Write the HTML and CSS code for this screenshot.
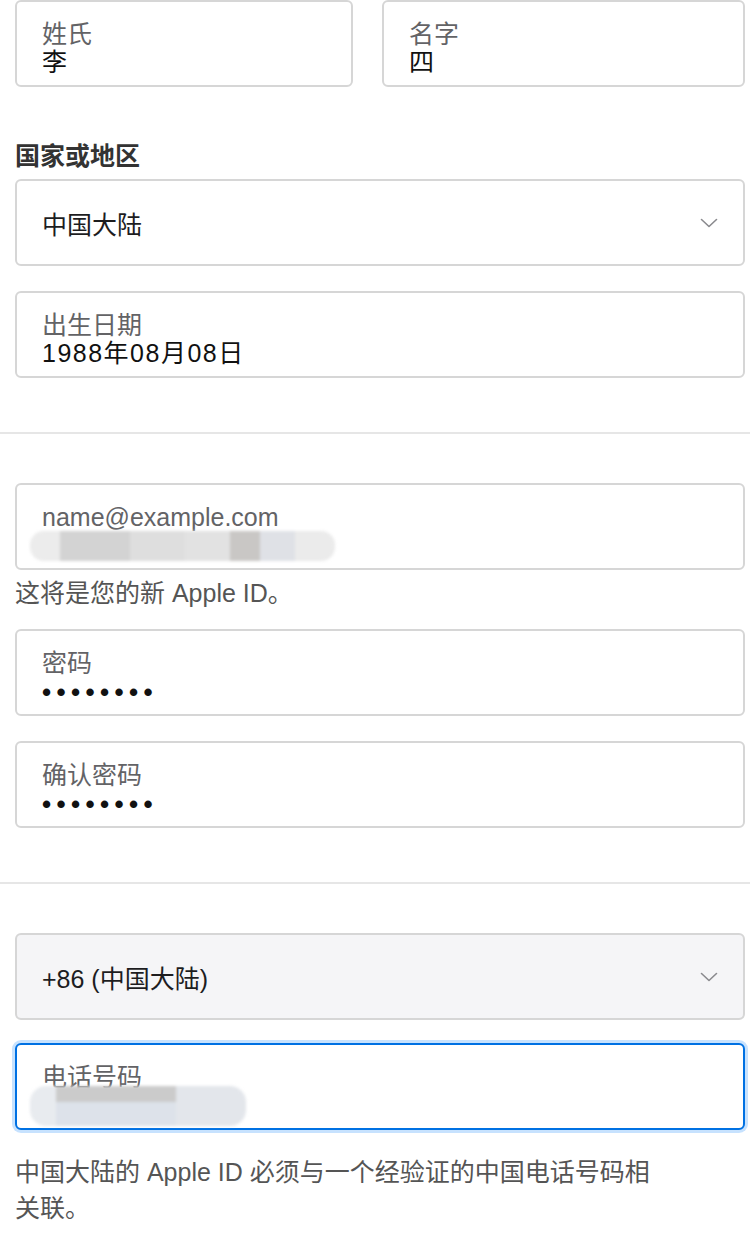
FILE: index.html
```html
<!DOCTYPE html>
<html lang="zh-CN">
<head>
  <meta charset="UTF-8">
  <title>创建 Apple ID</title>
  <link rel="stylesheet" href="styles.css">
</head>
<body>
<div class="form">
  <!-- 姓名 -->
  <div class="section">
    <div class="row">
      <div class="field">
        <p class="label">姓氏</p>
        <p class="value">李</p>
      </div>
      <div class="field">
        <p class="label">名字</p>
        <p class="value">四</p>
      </div>
    </div>
    <p class="title">国家或地区</p>
    <div class="select">
      <span>中国大陆</span>
      <svg class="arrow" width="18" height="10" viewBox="0 0 18 10"><path d="M1.5 1.5l7.5 7 7.5-7" fill="none" stroke="#8a8a8e" stroke-width="1.6" stroke-linecap="round" stroke-linejoin="round"/></svg>
    </div>
    <div class="field gapTop">
      <p class="label">出生日期</p>
      <p class="value">1988年08月08日</p>
    </div>
  </div>

  <div class="line"></div>

  <!-- 账号 -->
  <div class="section">
    <div class="field">
      <p class="label">name@example.com</p>
      <div class="mosaic">
        <span class="m1"></span><span class="m2"></span><span class="m3"></span><span class="m4"></span><span class="m5"></span><span class="m6"></span><span class="m7"></span>
      </div>
    </div>
    <p class="tip">这将是您的新 Apple ID。</p>
    <div class="field pwdTop">
      <p class="label">密码</p>
      <p class="dots">••••••••</p>
    </div>
    <div class="field gapTop">
      <p class="label">确认密码</p>
      <p class="dots">••••••••</p>
    </div>
  </div>

  <div class="line"></div>

  <!-- 电话 -->
  <div class="section">
    <div class="select grey">
      <span>+86 (中国大陆)</span>
      <svg class="arrow" width="18" height="10" viewBox="0 0 18 10"><path d="M1.5 1.5l7.5 7 7.5-7" fill="none" stroke="#8a8a8e" stroke-width="1.6" stroke-linecap="round" stroke-linejoin="round"/></svg>
    </div>
    <div class="field focus">
      <p class="label">电话号码</p>
      <div class="mosaic phone">
        <span class="p1"></span><span class="p2"></span><span class="p3"></span>
      </div>
    </div>
    <p class="help">中国大陆的 Apple ID 必须与一个经验证的中国电话号码相关联。</p>
  </div>
</div>
</body>
</html>
```

FILE: styles.css
```css
*{
  margin: 0;
  padding: 0;
}
html,body{
  width: 100%;
  background-color: #fff;
}
body{
  font-family: "Liberation Sans", "Noto Sans CJK SC", sans-serif;
  font-size: 26px;
  color: #1d1d1f;
}
.form{
  width: 750px;
}
.section{
  padding: 0 5px 0 15px;
}
/*两列*/
.row{
  display: grid;
  grid-template-columns: 338px 1fr;
  gap: 29px;
}
/*输入框*/
.field{
  position: relative;
  height: 87px;
  border: 2px solid #d6d6d6;
  border-radius: 6px;
  padding: 18px 25px 0;
  box-sizing: border-box;
  background-color: #fff;
}
.field .label{
  font-size: 25px;
  line-height: 28px;
  color: #636366;
}
.field .value{
  font-size: 25px;
  line-height: 28px;
  letter-spacing: 1.5px;
  color: #111;
}
.field .dots{
  font-size: 26px;
  line-height: 22px;
  margin-top: 4px;
  font-weight: bold;
  letter-spacing: 5.4px;
  color: #111;
}
.gapTop{
  margin-top: 25px;
}
.pwdTop{
  margin-top: 22px;
}
/*小标题*/
.title{
  margin: 56px 0 9px;
  font-size: 25px;
  line-height: 27px;
  font-weight: 600;
  color: #333;
}
/*下拉框*/
.select{
  display: flex;
  align-items: center;
  justify-content: space-between;
  height: 87px;
  border: 2px solid #d6d6d6;
  border-radius: 6px;
  padding: 0 25px 0 25px;
  box-sizing: border-box;
  font-size: 25px;
}
.select.grey{
  background-color: #f5f5f7;
}
.arrow{
  display: block;
}
/*分割线*/
.line{
  height: 2px;
  background-color: #e6e6e6;
  margin: 54px 0 49px;
}
/*提示文字*/
.tip{
  margin: 10px 0 0;
  font-size: 25px;
  line-height: 27px;
  color: #555;
}
.help{
  width: 648px;
  margin-top: 24px;
  font-size: 25px;
  line-height: 36px;
  color: #555;
}
/*蓝色聚焦框*/
.field.focus{
  margin-top: 23px;
  border-color: #0071e3;
  box-shadow: 0 0 0 3px rgba(0, 125, 250, 0.22);
}
/*打码*/
.mosaic{
  display: flex;
  height: 30px;
  margin: 0 0 0 -12px;
  filter: blur(1.5px);
}
.mosaic span{
  display: block;
  height: 100%;
}
.m1{ width: 30px; background-color: #ececec; border-radius: 14px 0 0 14px; }
.m2{ width: 70px; background-color: #d3d3d3; }
.m3{ width: 55px; background-color: #dedede; }
.m4{ width: 45px; background-color: #e2e2e2; }
.m5{ width: 30px; background-color: #c9c7c5; }
.m6{ width: 35px; background-color: #dfe1e6; }
.m7{ width: 40px; background-color: #ebebeb; border-radius: 0 14px 14px 0; }
.mosaic.phone{
  height: 40px;
  margin-top: -5px;
}
.p1{ width: 26px; background-color: #e8ebef; border-radius: 16px 0 0 16px; }
.p2{ width: 120px; background: linear-gradient(#cbcbcb 0 40%, #dde2ea 40% 100%); }
.p3{ width: 70px; background-color: #e3e6eb; border-radius: 0 16px 16px 0; }
```
